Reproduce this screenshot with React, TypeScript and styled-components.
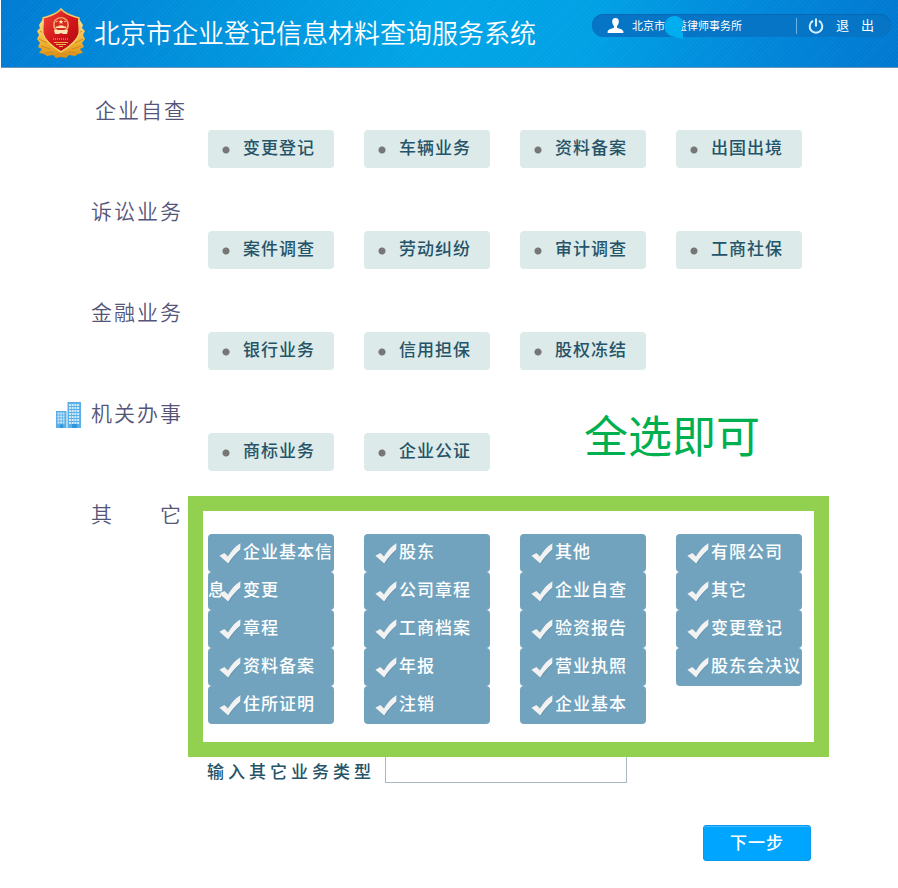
import React from "react";
import styled, { createGlobalStyle, css } from "styled-components";

const fontStack = '"Liberation Sans", "Noto Sans CJK SC", sans-serif';

const GlobalStyle = createGlobalStyle`
  * { box-sizing: border-box; }
  body {
    margin: 0;
    background: #fff;
    font-family: ${fontStack};
  }
`;

const Header = styled.header`
  display: flex;
  justify-content: space-between;
  align-items: flex-start;
  height: 68px;
  margin-left: 1px;
  padding: 0 7px 0 35px;
  border-bottom: 1px solid #6d93b8;
  background:
    repeating-linear-gradient(135deg, rgba(255, 255, 255, 0.03) 0 1px, transparent 1px 3px),
    linear-gradient(100deg, #007bd3 0%, #0093dd 24%, #00a5e7 48%, #00a0e5 66%, #0087da 84%, #0078d1 100%);
`;

const Brand = styled.div`
  display: flex;
  align-items: center;
  gap: 8px;
  height: 67px;
`;

const Title = styled.h1`
  margin: 0;
  font-size: 26px;
  line-height: 36px;
  font-weight: 350;
  color: #fff;
  white-space: nowrap;
`;

const AccountBar = styled.div`
  display: flex;
  align-items: center;
  width: 299px;
  height: 23px;
  margin-top: 14px;
  padding: 0 17px 0 15px;
  border-radius: 12px;
  background: #0775c6;
  box-shadow: inset 0 1px 1px #0568b4;
  color: #fff;
`;

const UserName = styled.span`
  position: relative;
  flex: 1;
  margin-left: 8px;
  font-size: 11px;
  line-height: 22px;
  white-space: nowrap;
`;

const Smudge = styled.svg`
  position: absolute;
  left: 32px;
  top: 1px;
`;

const LogoutButton = styled.button`
  display: flex;
  align-items: center;
  gap: 12px;
  height: 16px;
  padding: 0 0 0 11px;
  border: 0;
  border-left: 1px solid #6db4e6;
  background: none;
  color: #fff;
  font: 13px/16px ${fontStack};
  cursor: pointer;
`;

const Main = styled.main`
  display: flex;
  flex-direction: column;
  gap: 25px;
  padding: 24px 96px 0 56px;
`;

const Section = styled.section`
  display: flex;
  flex-direction: column;
`;

const Heading = styled.h2<{ $gap?: number }>`
  display: flex;
  align-items: center;
  gap: ${(p) => p.$gap ?? 10}px;
  height: 38px;
  margin: 0;
  font-size: 21px;
  font-weight: 350;
  line-height: 38px;
  letter-spacing: 2px;
  color: #55557a;
  white-space: pre;
`;

const IconSlot = styled.span`
  display: flex;
  width: 25px;
`;

const OptionGrid = styled.div`
  position: relative;
  display: grid;
  grid-template-columns: repeat(4, minmax(0, 1fr));
  column-gap: 30px;
  margin-left: 152px;
`;

const dot = css`
  background: radial-gradient(circle at 7px 11px, #777 3px, transparent 4px);
`;

const checkUri =
  "data:image/svg+xml," +
  encodeURIComponent(
    '<svg xmlns="http://www.w3.org/2000/svg" width="24" height="22" viewBox="0 0 24 22"><path d="M1 13.4 5.8 10.7 9.3 14.3C12.7 8.4 16.8 4 22 1l-.3 6.3C17.2 11 13.4 15.500 9.800 21.300Z" fill="#4f7f99" opacity=".45"/><path d="M.4 12.700 5.400 10 9 13.600C12.400 7.700 16.500 3.300 21.500.3L21.300 6.600C16.800 10.300 13 14.800 9.200 20.500Z" fill="#f2f2f2"/></svg>'
  );

const Tick = styled.input`
  appearance: none;
  position: relative;
  z-index: 2;
  width: 24px;
  height: 22px;
  margin: 0 0 0 11px;
  vertical-align: middle;
  cursor: pointer;
  ${dot}
  &:checked {
    background: url("${checkUri}") no-repeat;
  }
`;

const Option = styled.label`
  display: block;
  height: 38px;
  border-radius: 4px;
  background: #dceae9;
  color: #255368;
  font-size: 17px;
  line-height: 38px;
  font-weight: 500;
  letter-spacing: 1px;
  cursor: pointer;
  &:has(input:checked) {
    background: #71a3be;
    color: #fff;
  }
`;

const OptionText = styled.span`
  position: relative;
  z-index: 1;
`;

const Frame = styled.div`
  position: absolute;
  inset: -38px -27px -33px -20px;
  z-index: 3;
  border: 15px solid #92d14f;
  pointer-events: none;
`;

const Note = styled.p`
  position: absolute;
  right: 42px;
  top: -27px;
  margin: 0;
  font-size: 44px;
  line-height: 64px;
  color: #00b050;
  white-space: nowrap;
`;

const OtherRow = styled.div`
  display: flex;
  align-items: flex-end;
  gap: 10px;
  margin: 31px 0 0 151px;
`;

const OtherLabel = styled.label`
  font-size: 17px;
  line-height: 20px;
  font-weight: 500;
  letter-spacing: 4px;
  color: #255368;
  white-space: nowrap;
`;

const OtherInput = styled.input`
  width: 242px;
  height: 28px;
  padding: 0 6px;
  border: 1px solid #a5b9c4;
  background: #fff;
  font-size: 16px;
`;

const Footer = styled.footer`
  display: flex;
  justify-content: flex-end;
  padding: 42px 87px 24px;
`;

const NextButton = styled.button`
  width: 108px;
  height: 36px;
  padding: 0;
  border: 1px solid #0a98ec;
  border-radius: 3px;
  background: #00a5ff;
  box-shadow: inset 0 1px 0 #3db9fb;
  color: #fff;
  font: 500 17px/36px ${fontStack};
  letter-spacing: 1px;
  cursor: pointer;
`;

const Emblem = () => (
  <svg width="50" height="52" viewBox="0 0 50 52" aria-hidden="true">
    <defs>
      <linearGradient id="gold" x1="0" y1="0" x2="0" y2="1">
        <stop offset="0" stopColor="#ffe08a" />
        <stop offset=".6" stopColor="#f2b233" />
        <stop offset="1" stopColor="#d98c17" />
      </linearGradient>
      <linearGradient id="red" x1="0" y1="0" x2="1" y2="1">
        <stop offset="0" stopColor="#ee4a3c" />
        <stop offset=".5" stopColor="#d5161b" />
        <stop offset="1" stopColor="#a90b12" />
      </linearGradient>
    </defs>
    <path
      d="M7 11 3 17 4 20 1 23 3 27 1 31 4 35 2 39 6 41 3 45 8 46 11 48 17 47 20 50 25 49 30 50 33 47 39 48 42 46 47 45 44 41 48 39 46 35 49 31 47 27 49 23 46 20 47 17 43 11Z"
      fill="url(#gold)"
    />
    <path d="M4 23l6 4M3 31l8 4M5 38l9 3M9 45l9-1M46 23l-6 4M47 31l-8 4M45 38l-9 3M41 45l-9-1M7 17l3 4M43 17l-3 4M19 47l6-2 6 2" stroke="#cf8a20" fill="none" />
    <path d="M25 1C20 7 13 8 7 10 8 15 6 19 7 26 9 33 17 39 25 44 33 39 41 33 43 26 44 19 42 15 43 10 37 8 30 7 25 1Z" fill="url(#red)" stroke="#f5ca65" strokeWidth="1.500" />
    <circle cx="25" cy="17" r="8" fill="#f0a76a" />
    <circle cx="25" cy="16.500" r="6.300" fill="#d92a20" />
    <path d="M25 11.500l.7 1.500 1.600.1-1.200 1 .4 1.600-1.500-.8-1.500.8.4-1.600-1.200-1 1.600-.1zM20 20h10v-1.500h-2l-1-1h-4l-1 1h-2zM18 22h14l-1 4h-4l-2-1-2 1h-4z" fill="#ffe2b2" />
    <circle cx="21" cy="13.500" r=".7" fill="#ffe2a2" />
    <circle cx="29" cy="13.500" r=".7" fill="#ffe2a2" />
    <path d="M17 31h16" stroke="#f1bc74" strokeWidth="1.200" strokeDasharray="1 1" />
    <path d="M18 34.500h14M20 36.500h10M23 38.500h4" stroke="#f1b04c" />
  </svg>
);

const PersonIcon = () => (
  <svg width="17" height="17" viewBox="0 0 17 17" fill="#fff" aria-hidden="true">
    <path d="M8.500 1C5.800 1 5 2.800 5.200 5c.2 1.800.8 3 1.800 3.900v1.500C6.300 11.700 1 11.600.6 14.500V16h15.800v-1.500c-.4-2.900-5.700-2.800-6.400-4.100V8.900c1-.9 1.600-2.100 1.800-3.900.2-2.200-.6-4-3.300-4Z" />
  </svg>
);

const PowerIcon = () => (
  <svg width="16" height="16" viewBox="0 0 16 16" fill="none" stroke="#d8efff" strokeWidth="2" strokeLinecap="round" aria-hidden="true">
    <path d="M4.500 3.200a6.300 6.300 0 1 0 7 0M8 1.200v6.500" />
  </svg>
);

const BuildingsIcon = () => (
  <svg width="25" height="27" viewBox="0 0 25 27" aria-hidden="true">
    <path d="M0 10h10.500v17H0zM11.500 1H25v26H11.500z" fill="#5cafe6" />
    <path d="M1.500 12.500h7M1.500 15.500h7M1.500 18.500h7M1.500 21.500h7M13 4h10.500M13 7h10.500M13 10h10.500M13 13h10.500M13 16h10.500M13 19h10.500M13 22h10.500" stroke="#cfeafa" strokeWidth="2" strokeDasharray="2 .7" />
    <path d="M4 23.500h3V27H4zM16 23h5v4h-5z" fill="#2f96dc" />
  </svg>
);

const groups = [
  { title: "企业自查", gap: 14, items: ["变更登记", "车辆业务", "资料备案", "出国出境"] },
  { title: "诉讼业务", items: ["案件调查", "劳动纠纷", "审计调查", "工商社保"] },
  { title: "金融业务", items: ["银行业务", "信用担保", "股权冻结"] },
  { title: "机关办事", icon: true, note: "全选即可", items: ["商标业务", "企业公证"] },
  {
    title: "其\u3000\u3000它",
    checked: true,
    items: [
      "企业基本信息", "股东", "其他", "有限公司",
      "变更", "公司章程", "企业自查", "其它",
      "章程", "工商档案", "验资报告", "变更登记",
      "资料备案", "年报", "营业执照", "股东会决议",
      "住所证明", "注销", "企业基本",
    ],
  },
];

export default function App() {
  return (
    <>
      <GlobalStyle />
      <Header>
        <Brand>
          <Emblem />
          <Title>北京市企业登记信息材料查询服务系统</Title>
        </Brand>
        <AccountBar>
          <PersonIcon />
          <UserName>
            北京市{"\u3000"}益律师事务所
            <Smudge width="21" height="24" viewBox="0 0 21 24" aria-hidden="true">
              <path d="M10.500 0C5 0 .5 4.500.5 10s4 10 9 10.500L14 22l5 1V17L17 14l3-6C19 3 15 0 10.500 0Z" fill="#00adef" />
            </Smudge>
          </UserName>
          <LogoutButton type="button">
            <PowerIcon />
            <span>退</span>
            <span>出</span>
          </LogoutButton>
        </AccountBar>
      </Header>
      <Main>
        {groups.map((group) => (
          <Section key={group.title}>
            <Heading $gap={group.gap}>
              <IconSlot>{group.icon && <BuildingsIcon />}</IconSlot>
              {group.title}
            </Heading>
            <OptionGrid>
              {group.items.map((item) => (
                <Option key={item}>
                  <Tick type="checkbox" defaultChecked={group.checked} />
                  <OptionText>{item}</OptionText>
                </Option>
              ))}
              {group.checked && <Frame />}
              {group.note && <Note>{group.note}</Note>}
            </OptionGrid>
            {group.checked && (
              <OtherRow>
                <OtherLabel htmlFor="other-type">输入其它业务类型</OtherLabel>
                <OtherInput id="other-type" type="text" />
              </OtherRow>
            )}
          </Section>
        ))}
      </Main>
      <Footer>
        <NextButton type="button">下一步</NextButton>
      </Footer>
    </>
  );
}
